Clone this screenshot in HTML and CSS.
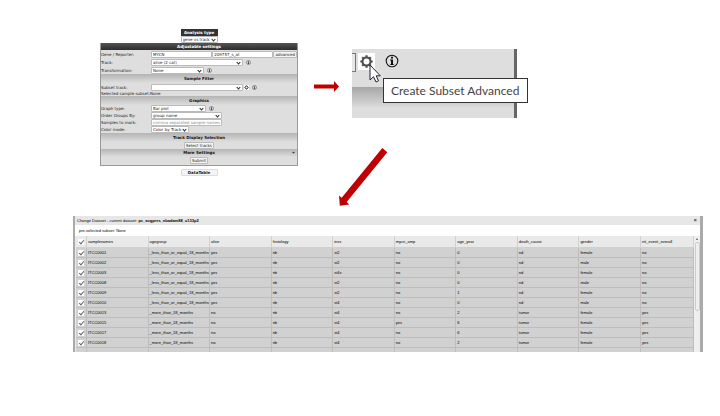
FILE: index.html
```html
<!DOCTYPE html>
<html lang="en">
<head>
<meta charset="utf-8">
<title>Create Subset Advanced</title>
<link rel="stylesheet" href="styles.css">
</head>
<body>
<svg width="0" height="0" class="defs" aria-hidden="true">
  <symbol id="info" viewBox="0 0 14 14">
    <circle cx="7" cy="7" r="5.8" fill="none" stroke="currentColor" stroke-width="1.1"/>
    <path d="M6 2.8h2v1.8h-2zM5 5.6h3v4.6h1v.9H5v-.9h1V6.5H5z" fill="currentColor"/>
  </symbol>
  <symbol id="gear" viewBox="0 0 16 16">
    <circle cx="8" cy="8" r="4.3" fill="none" stroke="currentColor" stroke-width="2.300"/>
    <path d="M8 1.400v2.400M8 12.200v2.400M1.400 8h2.400M12.200 8h2.400M3.400 3.400l1.700 1.700M10.900 10.900l1.700 1.700M12.600 3.400l-1.700 1.700M5.100 10.900l-1.700 1.700" stroke="currentColor" stroke-width="2.300"/>
  </symbol>
</svg>
<main class="guide">
  <form class="settings">
    <div class="analysis">
      <label class="analysis-title" for="analysis">Analysis type</label>
      <span class="select"><select id="analysis"><option>gene vs track</option></select></span>
    </div>
    <div class="panel">
      <h2 class="dark">Adjustable settings</h2>
      <div class="row"><label for="gene">Gene / Reporter:</label><div class="field full"><input id="gene" value="MYCN"><input aria-label="Reporter" value="209757_s_at"><button type="button">advanced</button></div></div>
      <div class="row"><label for="track">Track:</label><div class="field"><span class="select wide"><select id="track"><option>alive (2 cat)</option></select></span><svg class="icon"><use href="#info"/></svg></div></div>
      <div class="row"><label for="transform">Transformation:</label><div class="field"><span class="select small"><select id="transform"><option>None</option></select></span><svg class="icon"><use href="#info"/></svg></div></div>
      <h2 class="band">Sample Filter</h2>
      <div class="row"><label for="subset">Subset track:</label><div class="field"><span class="select wide"><select id="subset"><option></option></select></span><svg class="icon gear"><use href="#gear"/></svg><svg class="icon"><use href="#info"/></svg></div></div>
      <p class="selected">Selected sample subset:None</p>
      <h2 class="band">Graphics</h2>
      <div class="row tight"><label for="graph">Graph type:</label><div class="field"><span class="select graph"><select id="graph"><option>Bar plot</option></select></span><svg class="icon"><use href="#info"/></svg></div></div>
      <div class="row tight"><label for="order">Order Groups By:</label><div class="field"><span class="select medium"><select id="order"><option>group name</option></select></span></div></div>
      <div class="row tight"><label for="mark">Samples to mark:</label><div class="field"><input class="medium" id="mark" placeholder="comma separated sample names"></div></div>
      <div class="row tight"><label for="color">Color mode:</label><div class="field"><span class="select tiny"><select id="color"><option>Color by Track</option></select></span></div></div>
      <h2 class="band">Track Display Selection</h2>
      <div class="action"><button type="button">Select tracks</button></div>
      <h2 class="band more">More Settings</h2>
      <div class="action"><button type="button">Submit</button></div>
    </div>
    <button type="button" class="datatable">DataTable</button>
  </form>

  <svg class="arrow-right" viewBox="0 0 25 11"><path d="M0 3.500h20V0l5 5.500-5 5.500V7.500H0z"/></svg>

  <section class="detail">
    <div class="toolbar">
      <span class="edge"></span>
      <button type="button" class="gear-button" aria-label="Create Subset Advanced"><svg viewBox="0 0 16 16"><use href="#gear"/></svg></button>
      <svg class="info-large"><use href="#info"/></svg>
    </div>
    <div class="fade"></div>
    <svg class="cursor" viewBox="0 0 12 19"><path d="M1 1v15l3.500-3.300L7 18l2.500-1.200L7.200 11.800H11.300z" fill="#fff" stroke="#223" stroke-width="1"/></svg>
    <div class="tooltip" role="tooltip">Create Subset Advanced</div>
  </section>

  <svg class="arrow-down" viewBox="0 0 49 58"><path d="M43.300 0l5 4.300L7.700 54l2.600 2.400L.8 57.700 0 47.500l2.700 2.200z"/></svg>

  <section class="dialog">
    <header class="dialog-title"><span>Change Dataset - current dataset: <b>ps_avgpres_nbadam88_u133p2</b></span><button type="button" aria-label="Close">×</button></header>
    <p class="preselected">pre-selected subset: None</p>
    <div class="grid-area">
      <table>
        <thead><tr><th class="check"><input type="checkbox" checked aria-label="Select all"></th><th>samplenames</th><th>agegroup</th><th>alive</th><th>histology</th><th>inss</th><th>mycn_amp</th><th>age_year</th><th>death_cause</th><th>gender</th><th class="last">nti_event_overall</th></tr></thead>
        <tbody id="samples"></tbody>
      </table>
      <div class="scrollbar"><span class="up"></span><span class="thumb"></span></div>
    </div>
  </section>
</main>
<script src="script.js"></script>
</body>
</html>
```
FILE: styles.css
```css
* { box-sizing: border-box; }
body { margin: 0; background: #fff; font-family: "DejaVu Sans", sans-serif; color: #222; }
.defs { position: absolute; }
h2, p { margin: 0; }
button, input, select { font: inherit; color: inherit; margin: 0; }
.guide {
  display: grid;
  grid-template-columns: 27fr 198fr 16fr 25fr 13fr 177fr 174fr;
  grid-template-rows: 119px 68px auto;
  padding: 29px 17px 64px 73px;
}

.settings { grid-column: 2; grid-row: 1 / 3; display: flex; flex-direction: column; align-items: center; font-size: 4px; line-height: 5px; }
.analysis { width: 37px; height: 14px; display: flex; flex-direction: column; }
.analysis-title { background: #333; color: #fff; font-weight: bold; text-align: center; height: 7px; line-height: 7px; white-space: nowrap; }
.panel { width: 100%; background: #dedede; border: 1px solid #999; border-top: 0; }
.panel h2 { font-size: 4px; text-align: center; height: 9px; line-height: 9px; }
.panel h2.dark { height: 7px; line-height: 7px; color: #fff; background: linear-gradient(#555, #2c2c2c); }
.band { background: linear-gradient(#b4b4b4, #dedede); color: #111; }
.panel h2.more { height: 8px; line-height: 8px; position: relative; }
.more::after { content: "+"; position: absolute; right: 2px; }
.row { display: flex; height: 8px; align-items: center; }
.row.tight { height: 7px; }
.row label { flex: 0 0 50px; white-space: nowrap; }
.field { flex: 1; display: flex; align-items: center; gap: 3px; min-width: 0; }
.full input { flex: 1; }
.settings .full { gap: 0; }
.settings input, .settings select, .settings button { height: 7px; line-height: 5px; border: 1px solid #bbb; background: #fff; border-radius: 1px; padding: 0 1px; min-width: 0; }
.settings input::placeholder { color: #888; }
.settings button { white-space: nowrap; background: #f4f4f4; }
.select { position: relative; display: flex; height: 7px; }
.select select { appearance: none; width: 100%; }
.select::after { content: ""; position: absolute; right: 3px; top: 2px; width: 2px; height: 2px; border: solid #222; border-width: 0 1px 1px 0; transform: rotate(45deg); }
.wide { width: 92px; }
.medium { width: 71px; }
.small { width: 53px; }
.graph { width: 55px; }
.tiny { width: 38px; }
.icon { width: 5px; height: 5px; color: #222; }
.gear { margin: 0 0 0 -2px; background: #fff; }
.action { display: flex; justify-content: center; height: 7px; }
.panel .action:last-child { height: 8px; }
.settings .datatable { width: 37px; margin-top: 3px; font-weight: bold; border-color: #ddd; }

.arrow-right, .arrow-down { fill: #c00000; }
.arrow-right { grid-column: 4; grid-row: 1; width: 100%; height: 11px; margin-top: 52px; }
.arrow-down { grid-column: 5 / 7; grid-row: 2; width: 49px; height: 58px; }

.detail { grid-column: 6; grid-row: 1; position: relative; height: 69px; margin: 20px 12px 0 0; background: #dedede; border-right: 3px solid #666; }
.toolbar { display: flex; align-items: flex-start; height: 38px; padding-top: 4px; }
.edge { width: 4px; height: 19px; margin-right: 2px; border: 1px solid #777; border-left: 0; background: #e6e6e6; }
.gear-button { width: 17px; height: 17px; padding: 1px; border: 0; background: #fff; color: #505050; }
.gear-button svg { display: block; width: 15px; height: 15px; }
.info-large { width: 14px; height: 14px; margin: 1px 0 0 10px; color: #111; }
.fade { height: 31px; background: linear-gradient(#a6a6a6, #dedede 70%); }
.cursor { position: absolute; left: 17px; top: 15px; width: 12px; height: 19px; }
.tooltip { position: absolute; left: 31px; top: 29px; border: 1px solid #333; background: #fff; color: #444; padding: 0 8px 0 7px; font: 12px/23px "Lato", sans-serif; white-space: nowrap; }

.dialog { grid-column: 1 / -1; grid-row: 3; height: 136px; overflow: hidden; border: solid #aaa; border-width: 0 3px 0 2px; font: 4px/5px "Liberation Sans", sans-serif; color: #000; }
.dialog-title { display: flex; justify-content: space-between; align-items: center; height: 9px; padding: 0 3px 0 2px; background: #e7e7e7; }
.dialog-title button { border: 0; padding: 0; background: none; font-size: 6px; line-height: 7px; }
.preselected { height: 11px; line-height: 12px; padding-left: 4px; }
.grid-area { display: flex; padding-left: 1px; background: #e9e9e9; }
table { width: 100%; border-collapse: separate; border-spacing: 0; table-layout: fixed; }
th, td { padding: 0 0 0 1px; height: 10px; border: solid #bdbdbd; border-width: 0 1px 1px 0; text-align: left; font-weight: normal; white-space: nowrap; }
th { height: 12px; background: #e9e9e9; border-color: #d0d0d0; }
td { background: #d1d1d1; }
.check { width: 11px; padding: 0 2px; }
.last { width: 53px; }
.check input { appearance: none; display: block; position: relative; width: 6px; height: 6px; margin: 0; border-radius: 1px; background: #fff; }
.check input::after { content: ""; position: absolute; left: 2px; top: 0; width: 2px; height: 4px; border: solid #666; border-width: 0 1px 1px 0; transform: rotate(40deg); }
.scrollbar { flex: 0 0 6px; display: flex; flex-direction: column; align-items: center; background: #efefef; }
.up { margin: 2px 0; border: solid transparent; border-width: 0 1px 2px; border-bottom-color: #555; }
.thumb { width: 5px; height: 69px; border: 1px solid #ccc; border-radius: 2px; background: #eee; }
```
FILE: script.js
```js
const under = "_less_than_or_equal_18_months";
const over = "_more_than_18_months";
const rows = [
  ["ITCC0001", under, "yes", "nb", "st2", "no", "0", "nd", "female", "no"],
  ["ITCC0002", under, "yes", "nb", "st2", "no", "0", "nd", "male", "no"],
  ["ITCC0003", under, "yes", "nb", "st4s", "no", "0", "nd", "female", "no"],
  ["ITCC0008", under, "yes", "nb", "st2", "no", "0", "nd", "male", "no"],
  ["ITCC0009", under, "yes", "nb", "st2", "no", "1", "nd", "female", "no"],
  ["ITCC0010", under, "yes", "nb", "st4", "no", "0", "nd", "male", "no"],
  ["ITCC0013", over, "no", "nb", "st4", "no", "2", "tumor", "female", "yes"],
  ["ITCC0015", over, "no", "nb", "st4", "yes", "6", "tumor", "female", "yes"],
  ["ITCC0017", over, "no", "nb", "st4", "no", "6", "tumor", "female", "yes"],
  ["ITCC0018", over, "no", "nb", "st4", "no", "2", "tumor", "female", "yes"],
  ["", "", "", "", "", "", "", "", "", ""]
];
document.getElementById("samples").innerHTML = rows.map(row =>
  `<tr><td class="check">${row[0] ? `<input type="checkbox" checked aria-label="${row[0]}">` : ""}</td>` +
  row.map(value => `<td>${value}</td>`).join("") + "</tr>"
).join("");
```
